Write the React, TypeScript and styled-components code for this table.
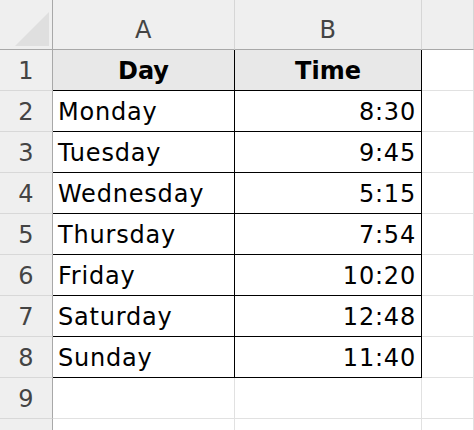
import React from "react";
import styled, { createGlobalStyle, css } from "styled-components";

const Global = createGlobalStyle`
  html, body { margin: 0; padding: 0; background: #ffffff; }
  body { font-family: "DejaVu Sans", "Liberation Sans", sans-serif; }
`;

const Sheet = styled.div`
  display: grid;
  grid-template-columns: 53px 182px 187px 1fr;
  grid-template-rows: 50px repeat(10, 41px);
  width: 474px;
  height: 430px;
  overflow: hidden;
  background: #ffffff;
`;

const Corner = styled.div`
  box-sizing: border-box;
  background: #efefef;
  border-right: 1px solid #a8a8a8;
  border-bottom: 1px solid #a8a8a8;
  display: flex;
  align-items: flex-end;
  justify-content: flex-end;
  padding: 0 3px 3px 0;
`;

const ColHead = styled.div`
  box-sizing: border-box;
  background: #efefef;
  border-right: 1px solid #d6d6d6;
  border-bottom: 1px solid #a8a8a8;
  display: flex;
  align-items: center;
  justify-content: center;
  padding-top: 10px;
  color: #444444;
  font-size: 24px;
  letter-spacing: 0.5px;
`;

const RowHead = styled.div`
  box-sizing: border-box;
  background: #efefef;
  border-right: 1px solid #a8a8a8;
  border-bottom: 1px solid #d8d8d8;
  display: flex;
  align-items: center;
  justify-content: center;
  color: #444444;
  font-size: 24px;
  padding-top: 1px;
`;

const Cell = styled.div<{ $table?: boolean; $head?: boolean; $align?: "left" | "right" | "center" }>`
  box-sizing: border-box;
  border-right: 1px solid #e1e1e1;
  border-bottom: 1px solid #e1e1e1;
  display: flex;
  align-items: center;
  padding: 1px 5px 0 5px;
  font-size: 24px;
  letter-spacing: 0.8px;
  color: #000000;
  white-space: nowrap;
  justify-content: ${(p) =>
    p.$align === "right" ? "flex-end" : p.$align === "center" ? "center" : "flex-start"};
  ${(p) =>
    p.$table &&
    css`
      border-right-color: #000000;
      border-bottom-color: #000000;
    `}
  ${(p) =>
    p.$head &&
    css`
      background: #e8e8e8;
      font-weight: bold;
      letter-spacing: 0;
    `}
`;

const rows: [string, string][] = [
  ["Monday", "8:30"],
  ["Tuesday", "9:45"],
  ["Wednesday", "5:15"],
  ["Thursday", "7:54"],
  ["Friday", "10:20"],
  ["Saturday", "12:48"],
  ["Sunday", "11:40"],
];

export default function App() {
  return (
    <>
      <Global />
      <Sheet>
        <Corner>
          <svg width="34" height="34" viewBox="0 0 34 34">
            <polygon points="0,34 34,0 34,34" fill="#dfdfdf" />
          </svg>
        </Corner>
        <ColHead>A</ColHead>
        <ColHead>B</ColHead>
        <ColHead />

        <RowHead>1</RowHead>
        <Cell $table $head $align="center">Day</Cell>
        <Cell $table $head $align="center">Time</Cell>
        <Cell />

        {rows.map(([day, time], i) => (
          <React.Fragment key={day}>
            <RowHead>{i + 2}</RowHead>
            <Cell $table>{day}</Cell>
            <Cell $table $align="right">{time}</Cell>
            <Cell />
          </React.Fragment>
        ))}

        <RowHead>9</RowHead>
        <Cell />
        <Cell />
        <Cell />

        <RowHead>10</RowHead>
        <Cell />
        <Cell />
        <Cell />
      </Sheet>
    </>
  );
}
